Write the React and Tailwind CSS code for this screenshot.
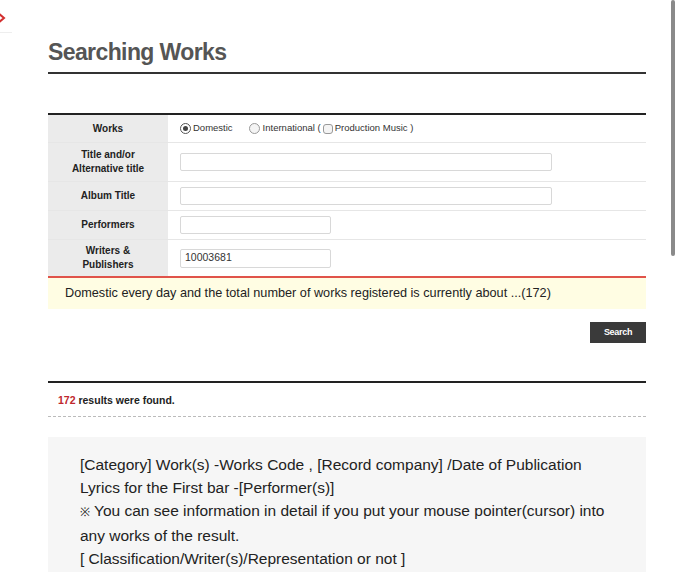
import React from "react";

function Radio({ checked }) {
  return (
    <span className={`inline-block w-[11px] h-[11px] rounded-full border ${checked ? "border-[#555] bg-white" : "border-[#999] bg-[#f4f4f4]"} relative align-middle`}>
      {checked && <span className="absolute left-[2px] top-[2px] w-[5px] h-[5px] rounded-full bg-[#444]" />}
    </span>
  );
}

function Row({ label, children, h, last }) {
  return (
    <div className={`flex ${last ? "border-b-2 border-[#e0534a]" : "border-b border-[#e6e6e6]"}`}>
      <div className={`w-[120px] shrink-0 bg-[#ebebeb] flex items-center justify-center text-center text-[10px] font-bold leading-[14px] text-[#222] ${h}`}>
        {label}
      </div>
      <div className="flex-1 flex items-center pl-[12px]">{children}</div>
    </div>
  );
}

export default function App() {
  return (
    <div className="relative w-[680px] h-[572px] overflow-hidden bg-white font-['Liberation_Sans',Arial,sans-serif] text-[#222]">
      {/* top-left partial widget */}
      <div className="absolute left-0 top-0 w-[12px] h-[33px] border-b border-[#eeeeee]">
        <svg className="absolute left-[-4px] top-[12px]" width="11" height="12" viewBox="0 0 11 12">
          <path d="M2 1 L8 6 L2 11" fill="none" stroke="#d32f2f" strokeWidth="2" />
        </svg>
      </div>
      {/* scrollbar */}
      <div className="absolute left-[671px] top-0 w-[4px] h-[256px] rounded-full bg-[#8a8a8a]" />

      <div className="ml-[48px] w-[598px] pt-[37px]">
        <h1 className="text-[23px] font-bold tracking-[-0.6px] text-[#555] leading-[30px] pb-[5px] border-b-2 border-[#333]">
          Searching Works
        </h1>

        <div className="mt-[39px] border-t-2 border-[#222]">
          <Row label="Works" h="h-[27px]">
            <div className="flex items-center text-[9.5px] text-[#333]">
              <Radio checked />
              <span className="ml-[2px]">Domestic</span>
              <span className="ml-[16px]"><Radio /></span>
              <span className="ml-[3px]">International (</span>
              <span className="ml-[2px] inline-block w-[10px] h-[10px] rounded-[3px] border border-[#999] bg-[#f4f4f4]" />
              <span className="ml-[2px]">Production Music )</span>
            </div>
          </Row>
          <Row label={<>Title and/or<br />Alternative title</>} h="h-[38px]">
            <div className="w-[372px] h-[18px] border border-[#d8d8d8] rounded-[2px] bg-white" />
          </Row>
          <Row label="Album Title" h="h-[28px]">
            <div className="w-[372px] h-[18px] border border-[#d8d8d8] rounded-[2px] bg-white" />
          </Row>
          <Row label="Performers" h="h-[28px]">
            <div className="w-[151px] h-[18px] border border-[#d8d8d8] rounded-[2px] bg-white" />
          </Row>
          <Row label={<>Writers &amp;<br />Publishers</>} h="h-[36px]" last>
            <div className="w-[151px] h-[19px] border border-[#d8d8d8] rounded-[2px] bg-white flex items-center pl-[4px] text-[10.5px] text-[#333]">
              10003681
            </div>
          </Row>
          <div className="h-[31px] bg-[#fffde3] flex items-center pl-[17px] text-[12.7px] text-[#222]">
            Domestic every day and the total number of works registered is currently about ...(172)
          </div>
        </div>

        <div className="flex justify-end mt-[13px]">
          <div className="w-[56px] h-[21px] bg-[#3a3a3a] text-white text-[9px] font-bold flex items-center justify-center tracking-[-0.3px]">
            Search
          </div>
        </div>

        <div className="mt-[38px] border-t-2 border-[#222] pt-[10px] pb-[9px] pl-[10px] text-[10.5px] font-bold text-[#222] leading-[14px]">
          <span className="text-[#c0272d]">172</span> results were found.
        </div>
        <div className="border-t border-dashed border-[#bbb]" />

        <div className="mt-[20px] bg-[#f6f6f6] pt-[16px] pl-[32px] pb-[20px] text-[15.5px] leading-[23px] text-[#222]">
          [Category] Work(s) -Works Code , [Record company] /Date of Publication<br />
          Lyrics for the First bar -[Performer(s)]<br />
          <span className="text-[12px]">※</span> You can see information in detail if you put your mouse pointer(cursor) into<br />
          any works of the result.<br />
          [ Classification/Writer(s)/Representation or not ]
        </div>
      </div>
    </div>
  );
}
